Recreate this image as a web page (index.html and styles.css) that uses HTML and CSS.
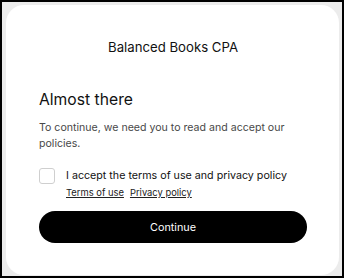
FILE: index.html
```html
<!DOCTYPE html>
<html>
<head>
<meta charset="utf-8">
<link rel="stylesheet" href="styles.css">
</head>
<body>
<div class="frame">
  <div class="card">
    <div class="brand">Balanced Books CPA</div>
    <h1 class="heading">Almost there</h1>
    <p class="intro">To continue, we need you to read and accept our policies.</p>
    <div class="consent">
      <span class="checkbox"></span>
      <div class="consent-text">
        <div class="label">I accept the terms of use and privacy policy</div>
        <div class="links"><a class="link">Terms of use</a><a class="link">Privacy policy</a></div>
      </div>
    </div>
    <button class="continue">Continue</button>
  </div>
</div>
</body>
</html>
```
FILE: styles.css
```css
html, body {
  margin: 0;
  padding: 0;
  background: #000;
}
body {
  width: 344px;
  height: 278px;
  padding: 2px;
  box-sizing: border-box;
  font-family: Inter, "Liberation Sans", sans-serif;
}
.frame {
  height: 100%;
  background: #ececec;
  padding: 3px 3px 1px 4px;
  box-sizing: border-box;
}
.card {
  height: 100%;
  background: #fff;
  border-radius: 18px;
  box-sizing: border-box;
  padding: 34px 32px 0 33px;
  display: flex;
  flex-direction: column;
}
.brand {
  text-align: center;
  font-size: 13.2px;
  line-height: 17px;
  color: #111;
}
.heading {
  margin: 33px 0 0;
  font-size: 15.7px;
  line-height: 22px;
  font-weight: 400;
  color: #111;
}
.intro {
  margin: 9px 0 0;
  font-size: 10.6px;
  line-height: 16px;
  color: #484848;
}
.consent {
  margin-top: 16px;
  display: flex;
  gap: 11px;
}
.checkbox {
  width: 16px;
  height: 16px;
  box-sizing: border-box;
  border: 1px solid #cfcfcf;
  border-radius: 3px;
  flex: none;
}
.consent-text {
  display: flex;
  flex-direction: column;
}
.label {
  font-size: 10.7px;
  line-height: 16px;
  color: #111;
}
.links {
  margin-top: 2px;
  display: flex;
  gap: 6px;
}
.link {
  font-size: 9.4px;
  line-height: 14px;
  color: #222;
  text-decoration: underline;
}
.continue {
  margin-top: 11px;
  height: 32px;
  border: none;
  border-radius: 16px;
  background: #000;
  color: #fff;
  font-family: inherit;
  font-size: 10.8px;
  padding: 0;
}
```
